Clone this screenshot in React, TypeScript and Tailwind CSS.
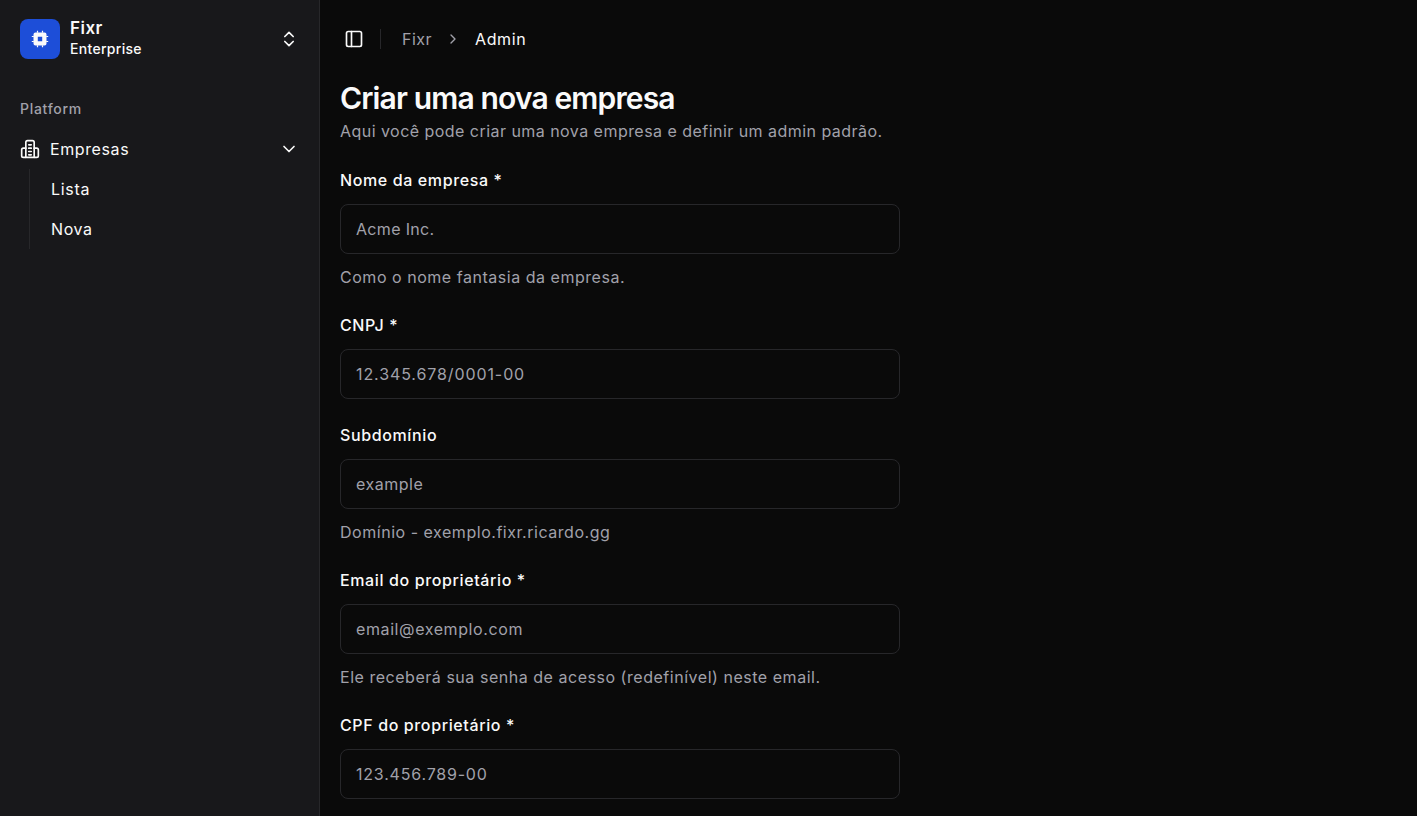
import React from "react";
import { ChevronDown, ChevronRight, ChevronsUpDown, PanelLeft } from "lucide-react";

const font = { fontFamily: "Inter, 'Liberation Sans', sans-serif" };

function Chip() {
  return (
    <svg width="20" height="20" viewBox="0 0 20 20" fill="none">
      <path fillRule="evenodd" clipRule="evenodd" fill="#fafafa" d="M5.5 3.5h9a2 2 0 0 1 2 2v9a2 2 0 0 1-2 2h-9a2 2 0 0 1-2-2v-9a2 2 0 0 1 2-2ZM7.8 7.8v4.4h4.4V7.8Z" />
      <path stroke="#fafafa" strokeWidth="1.2" d="M7.5 1.8v2M12.5 1.8v2M7.5 16.2v2M12.5 16.2v2M1.8 7.5h2M1.8 12.5h2M16.2 7.5h2M16.2 12.5h2" />
    </svg>
  );
}

function Building() {
  return (
    <svg width="20" height="20" viewBox="0 0 24 24" fill="none" stroke="#fafafa" strokeWidth="2" strokeLinecap="round" strokeLinejoin="round">
      <path d="M7 22V4a2 2 0 0 1 2-2h6a2 2 0 0 1 2 2v18" />
      <path d="M7 11H4a2 2 0 0 0-2 2v7a2 2 0 0 0 2 2h16a2 2 0 0 0 2-2v-7a2 2 0 0 0-2-2h-3" />
      <path d="M10.5 7h3M10.5 11h3M10.5 15h3M10.5 19h3" />
    </svg>
  );
}

function Field({ label, placeholder, help, tracking }: { label: string; placeholder: string; help?: string; tracking: string }) {
  return (
    <div className="flex flex-col w-[560px]">
      <label className="text-base leading-6 font-medium text-[#fafafa] tracking-[0.62px]">{label}</label>
      <input
        readOnly
        placeholder={placeholder}
        className={`mt-3 h-[50px] w-full rounded-lg border border-[#27272a] bg-transparent px-[15px] text-base text-[#fafafa] outline-none placeholder:text-[#a1a1aa] ${tracking}`}
        style={font}
      />
      {help && <p className="mt-[11px] text-base leading-6 text-[#a1a1aa] tracking-[0.53px]">{help}</p>}
    </div>
  );
}

export default function App() {
  return (
    <div className="flex h-screen overflow-hidden bg-[#0a0a0a] text-[#fafafa]" style={font}>
      <aside className="flex w-[320px] shrink-0 flex-col border-r border-[#27272a] bg-[#18181b]">
        <div className="flex items-center gap-[10px] pl-5 pr-[20px] pt-[19px]">
          <div className="flex h-10 w-10 items-center justify-center rounded-lg bg-[#1d4ed8]">
            <Chip />
          </div>
          <div className="flex flex-1 flex-col">
            <span className="text-[17px] leading-[18px] font-semibold tracking-[0.5px]">Fixr</span>
            <span className="mt-[2px] text-sm leading-[20px] font-medium tracking-[0.3px]">Enterprise</span>
          </div>
          <ChevronsUpDown size={20} strokeWidth={2} />
        </div>
        <div className="mt-10 pl-5 text-sm leading-5 font-medium text-[#a1a1aa] tracking-[0.7px]">Platform</div>
        <div className="mt-[10px] flex h-10 items-center gap-[10px] pl-5 pr-[20px]">
          <Building />
          <span className="flex-1 text-base tracking-[0.6px]">Empresas</span>
          <ChevronDown size={20} strokeWidth={2} />
        </div>
        <div className="ml-[29px] flex flex-col border-l border-[#27272a] pl-[21px]">
          <div className="flex h-10 items-center text-base tracking-[0.7px]">Lista</div>
          <div className="flex h-10 items-center text-base tracking-[0.6px]">Nova</div>
        </div>
      </aside>
      <main className="flex min-w-0 flex-1 flex-col">
        <header className="flex h-[78px] shrink-0 items-center pl-6">
          <PanelLeft size={20} strokeWidth={2} />
          <div className="ml-[16px] h-5 w-px bg-[#27272a]" />
          <span className="ml-[21px] text-base text-[#a1a1aa] tracking-[0.5px]">Fixr</span>
          <ChevronRight size={16} strokeWidth={2} className="ml-[13px] text-[#a1a1aa]" />
          <span className="ml-[14px] text-base tracking-[0.6px]">Admin</span>
        </header>
        <div className="flex flex-col px-5">
          <h1 className="text-3xl leading-[40px] font-semibold tracking-[-0.85px]">Criar uma nova empresa</h1>
          <p className="mt-[1px] text-base leading-6 text-[#a1a1aa] tracking-[0.46px]">Aqui você pode criar uma nova empresa e definir um admin padrão.</p>
          <div className="mt-[25px] flex flex-col gap-6">
            <Field tracking="tracking-[0.33px]" label="Nome da empresa *" placeholder="Acme Inc." help="Como o nome fantasia da empresa." />
            <Field tracking="tracking-[0.9px]" label="CNPJ *" placeholder="12.345.678/0001-00" />
            <Field tracking="tracking-[0.5px]" label="Subdomínio" placeholder="example" help="Domínio - exemplo.fixr.ricardo.gg" />
            <Field tracking="tracking-[0.6px]" label="Email do proprietário *" placeholder="email@exemplo.com" help="Ele receberá sua senha de acesso (redefinível) neste email." />
            <Field tracking="tracking-[0.8px]" label="CPF do proprietário *" placeholder="123.456.789-00" />
          </div>
        </div>
      </main>
    </div>
  );
}
